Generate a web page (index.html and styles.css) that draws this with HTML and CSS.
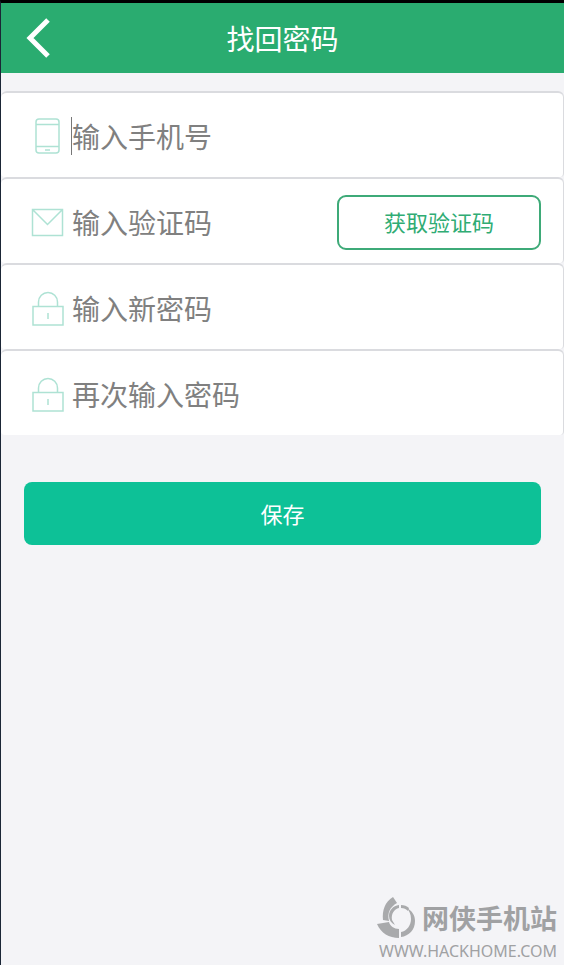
FILE: index.html
```html
<!DOCTYPE html>
<html lang="zh-CN">
<head>
<meta charset="utf-8">
<meta name="viewport" content="width=device-width, initial-scale=1">
<title>找回密码</title>
<link rel="stylesheet" href="styles.css">
</head>
<body>
<header class="topbar">
  <a class="back" href="#" aria-label="返回">
    <svg width="28" height="42" viewBox="0 0 28 42" fill="none" stroke="#fff" stroke-width="5"><path d="M24 3 6 21l18 18"/></svg>
  </a>
  <h1 class="title">找回密码</h1>
</header>
<form class="form">
  <div class="row">
    <label class="icon" for="phone" aria-label="手机号">
      <svg width="34" height="38" viewBox="0 0 34 38" fill="none" stroke="#aee2d4" stroke-width="1.5"><rect x="5" y="2" width="23" height="34" rx="3"/><path d="M5 7.500h23M5 29.500h23M14 33h5"/></svg>
    </label>
    <div class="field focused"><input class="input" id="phone" type="tel" placeholder="输入手机号"></div>
  </div>
  <div class="row">
    <label class="icon" for="code" aria-label="验证码">
      <svg width="34" height="38" viewBox="0 0 34 38" fill="none" stroke="#aee2d4" stroke-width="1.5"><path d="M1.500 6.500h30v26h-30zM1.500 6.500l15 15 15-15"/></svg>
    </label>
    <div class="field"><input class="input" id="code" type="text" placeholder="输入验证码"></div>
    <button class="code-button" type="button">获取验证码</button>
  </div>
  <div class="row">
    <label class="icon" for="password" aria-label="新密码">
      <svg width="34" height="38" viewBox="0 0 34 38" fill="none" stroke="#aee2d4" stroke-width="1.5"><path d="M2 17.500h30V36H2zM7.500 17.500V13a9.500 9.500 0 0 1 19 0v4.500M17 24v6"/></svg>
    </label>
    <div class="field"><input class="input" id="password" type="password" placeholder="输入新密码"></div>
  </div>
  <div class="row">
    <label class="icon" for="confirm" aria-label="再次输入密码">
      <svg width="34" height="38" viewBox="0 0 34 38" fill="none" stroke="#aee2d4" stroke-width="1.5"><path d="M2 17.500h30V36H2zM7.500 17.500V13a9.500 9.500 0 0 1 19 0v4.500M17 24v6"/></svg>
    </label>
    <div class="field"><input class="input" id="confirm" type="password" placeholder="再次输入密码"></div>
  </div>
  <button class="save" type="submit">保存</button>
</form>
<footer class="brand">
  <div class="brand-line">
    <svg width="38" height="42" viewBox="0 0 38 42" fill="#a9aaac">
      <path d="M16 0l4 6c-7 4-10 10-8 18l-6-1C5 13 8 5 16 0z"/>
      <path d="M0 27l12-2c1 4 5 7 10 7v9C12 41 4 36 0 27z"/>
      <path d="M24 40v-5c6-1 10-7 10-13 0-5-2-8-4-11 5 3 8 7 8 13 0 9-6 15-14 16z"/>
      <path d="M22 8v3c-5 1-8 6-7 12l3 5c-4-2-6-5-6-9 0-6 4-10 10-11z"/>
      <path d="M24 8c3 0 6 1 8 3l-1 3c-2-2-4-3-7-3z"/>
    </svg>
    <span class="brand-name">网侠手机站</span>
  </div>
  <span class="brand-url">WWW.HACKHOME.COM</span>
</footer>
</body>
</html>
```
FILE: styles.css
```css
* {
  box-sizing: border-box;
}

body {
  display: flex;
  flex-direction: column;
  min-height: 100vh;
  margin: 0;
  border-top: 3px solid #000;
  border-left: 1px solid #1b2636;
  background: #f4f4f7;
  font-family: "Noto Sans CJK SC", sans-serif;
}

.topbar {
  display: grid;
  grid-template-columns: 72px 1fr 72px;
  align-items: center;
  height: 70px;
  background: #2aac70;
  color: #fff;
}

.back {
  display: flex;
  padding-left: 23px;
}

.title {
  margin: 0;
  font-size: 28px;
  font-weight: 400;
  line-height: 40px;
  text-align: center;
}

.form {
  display: flex;
  flex-direction: column;
  margin-top: 18px;
}

.row {
  display: flex;
  align-items: center;
  height: 86px;
  padding: 2px 22px 0 30px;
  border: solid #dadbdf;
  border-width: 2px 1px 0 0;
  border-radius: 6px 6px 4px 4px;
  background: #fff;
}

.icon,
.icon svg {
  display: block;
}

.field {
  display: flex;
  flex: 1;
  min-width: 0;
  margin-left: 6px;
  border-left: 1px solid transparent;
}

.focused {
  border-left-color: #777;
}

.input {
  width: 100%;
  height: 38px;
  padding: 0;
  border: 0;
  outline: 0;
  background: transparent;
  color: #444;
  font: 28px "Noto Sans CJK SC", sans-serif;
}

.input::placeholder {
  color: #808080;
  opacity: 1;
}

.code-button,
.save {
  padding: 0 0 2px;
  font: 22px "Noto Sans CJK SC", sans-serif;
}

.code-button {
  width: 204px;
  height: 55px;
  border: 2px solid #3eaa78;
  border-radius: 9px;
  background: #fff;
  color: #2fac74;
}

.save {
  height: 63px;
  margin: 47px 23px 0;
  border: 0;
  border-radius: 8px;
  background: #0dc197;
  color: #fff;
}

.brand {
  display: flex;
  flex-direction: column;
  align-items: flex-end;
  margin-top: auto;
  padding: 0 7px 2px 0;
  color: #a0a1a3;
}

.brand-line {
  display: flex;
  align-items: center;
  gap: 7px;
}

.brand-name {
  font-size: 27px;
  font-weight: 700;
  line-height: 42px;
}

.brand-url {
  font: 16px/24px "Noto Sans", sans-serif;
}
```
